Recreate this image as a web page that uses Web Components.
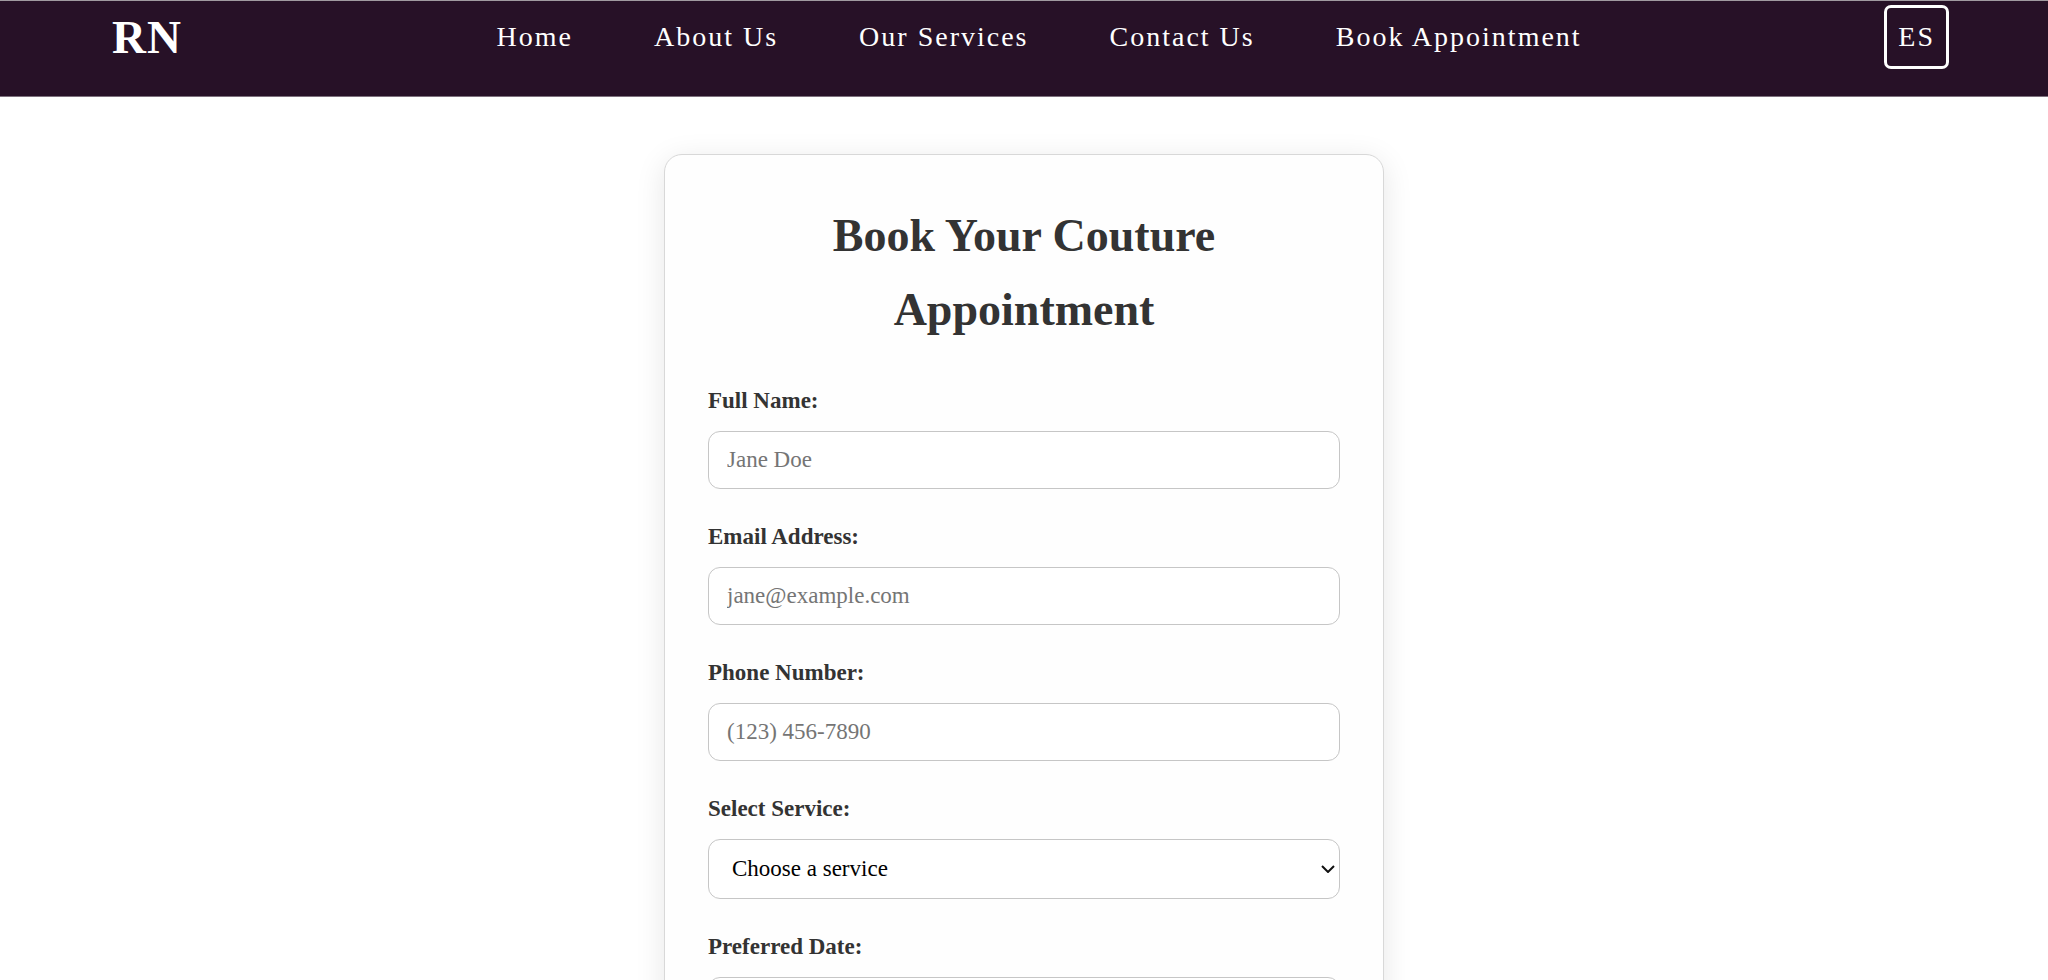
<!DOCTYPE html>
<html lang="en">
<head>
<meta charset="utf-8">
<meta name="viewport" content="width=device-width, initial-scale=1">
<title>Book Appointment</title>
<style>
  body {
    margin: 0;
    background: #fff;
    color: #333;
    font-family: "Liberation Serif", "Times New Roman", serif;
    font-size: 23px;
    line-height: 36px;
  }
</style>
</head>
<body>
<site-header>
  <nav-link href="#home">Home</nav-link>
  <nav-link href="#about">About Us</nav-link>
  <nav-link href="#services">Our Services</nav-link>
  <nav-link href="#contact">Contact Us</nav-link>
  <nav-link href="#book">Book Appointment</nav-link>
</site-header>
<booking-card heading="Book Your Couture Appointment">
  <text-field label="Full Name:" type="text" placeholder="Jane Doe"></text-field>
  <text-field label="Email Address:" type="email" placeholder="jane@example.com"></text-field>
  <text-field label="Phone Number:" type="tel" placeholder="(123) 456-7890"></text-field>
  <select-field label="Select Service:" choice="Choose a service"></select-field>
  <text-field label="Preferred Date:" type="date"></text-field>
</booking-card>

<script>
const fieldStyles = `
  :host { display: block; }
  label { display: block; margin-bottom: 12px; font-weight: bold; }
  input, select {
    display: block;
    box-sizing: border-box;
    width: 100%;
    height: 58px;
    margin: 0;
    border: 1px solid #c6c6c6;
    border-radius: 12px;
    background: #fff;
    font: inherit;
    outline: none;
  }
`;

customElements.define('site-header', class extends HTMLElement {
  constructor() {
    super();
    this.attachShadow({ mode: 'open' }).innerHTML = `
      <style>
        :host {
          display: block;
          background: #271127;
          color: #fff;
          border-top: 1px solid #a09aa0;
          border-bottom: 1px solid #7d707d;
          font-size: 28px;
          line-height: 36px;
          letter-spacing: 2px;
        }
        .bar {
          display: flex;
          align-items: center;
          justify-content: space-between;
          padding: 4px 99px 27px 112px;
        }
        .logo {
          color: inherit;
          text-decoration: none;
          font-size: 47px;
          font-weight: bold;
          letter-spacing: 1px;
        }
        nav { display: flex; gap: 81px; margin-left: 12px; }
        button {
          height: 64px;
          padding: 0 11px;
          border: 3px solid #fff;
          border-radius: 7px;
          background: transparent;
          color: inherit;
          font: inherit;
          letter-spacing: inherit;
        }
      </style>
      <div class="bar">
        <a class="logo" href="#home">RN</a>
        <nav><slot></slot></nav>
        <button type="button">ES</button>
      </div>`;
  }
});

customElements.define('nav-link', class extends HTMLElement {
  constructor() {
    super();
    this.attachShadow({ mode: 'open' }).innerHTML = `
      <style>
        :host { display: block; white-space: nowrap; }
        a { color: inherit; text-decoration: none; }
      </style>
      <a><slot></slot></a>`;
    this.shadowRoot.querySelector('a').href = this.getAttribute('href');
  }
});

customElements.define('booking-card', class extends HTMLElement {
  constructor() {
    super();
    this.attachShadow({ mode: 'open' }).innerHTML = `
      <style>
        :host {
          display: block;
          box-sizing: border-box;
          max-width: 720px;
          margin: 57px auto;
          padding: 44px 43px;
          border: 1px solid #d8d8d8;
          border-radius: 18px;
          background: #fefefe;
          box-shadow: 0 6px 30px rgba(0, 0, 0, 0.1);
        }
        h1 {
          margin: 0 0 36px;
          font-size: 46px;
          line-height: 74px;
          text-align: center;
        }
        form { display: grid; gap: 30px; }
      </style>
      <h1></h1>
      <form><slot></slot></form>`;
    this.shadowRoot.querySelector('h1').textContent = this.getAttribute('heading');
  }
});

customElements.define('text-field', class extends HTMLElement {
  constructor() {
    super();
    this.attachShadow({ mode: 'open' }).innerHTML = `
      <style>
        ${fieldStyles}
        input { padding: 0 18px; }
        input::placeholder { color: #757575; }
      </style>
      <label for="field"></label>
      <input id="field">`;
    const input = this.shadowRoot.querySelector('input');
    this.shadowRoot.querySelector('label').textContent = this.getAttribute('label');
    input.type = this.getAttribute('type');
    input.placeholder = this.getAttribute('placeholder') || '';
  }
});

customElements.define('select-field', class extends HTMLElement {
  constructor() {
    super();
    this.attachShadow({ mode: 'open' }).innerHTML = `
      <style>
        ${fieldStyles}
        .box { display: grid; align-items: center; }
        .box > * { grid-area: 1 / 1; }
        select { height: 60px; padding: 0 23px; color: #000; appearance: none; }
        svg { justify-self: end; margin-right: 5px; pointer-events: none; }
      </style>
      <label for="field"></label>
      <div class="box">
        <select id="field"><option></option></select>
        <svg width="14" height="8" viewBox="0 0 14 8" fill="none" stroke="#111" stroke-width="2">
          <path d="M1 1l6 6 6-6"/>
        </svg>
      </div>`;
    this.shadowRoot.querySelector('label').textContent = this.getAttribute('label');
    this.shadowRoot.querySelector('option').textContent = this.getAttribute('choice');
  }
});
</script>
</body>
</html>
